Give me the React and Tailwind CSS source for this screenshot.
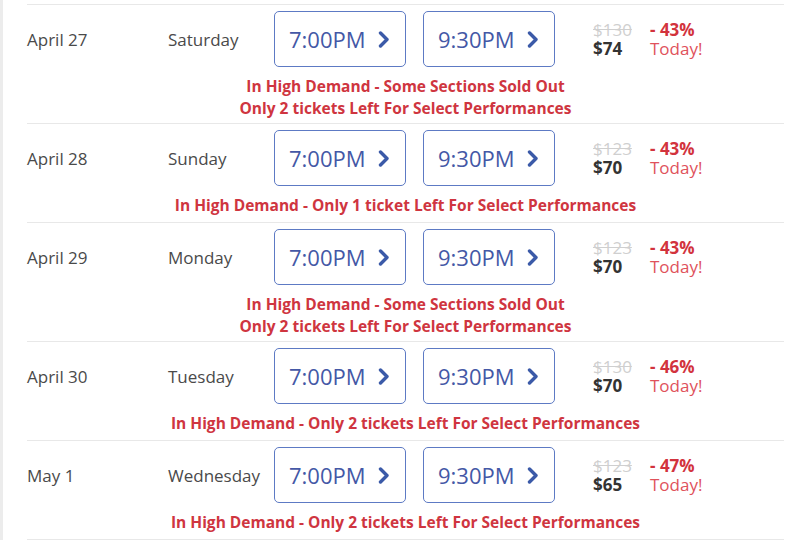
import React from 'react';

const rows = [
  { date: 'April 27', day: 'Saturday', was: '$130', now: '$74', off: '- 43%', notes: ['In High Demand - Some Sections Sold Out', 'Only 2 tickets Left For Select Performances'] },
  { date: 'April 28', day: 'Sunday', was: '$123', now: '$70', off: '- 43%', notes: ['In High Demand - Only 1 ticket Left For Select Performances'] },
  { date: 'April 29', day: 'Monday', was: '$123', now: '$70', off: '- 43%', notes: ['In High Demand - Some Sections Sold Out', 'Only 2 tickets Left For Select Performances'] },
  { date: 'April 30', day: 'Tuesday', was: '$130', now: '$70', off: '- 46%', notes: ['In High Demand - Only 2 tickets Left For Select Performances'] },
  { date: 'May 1', day: 'Wednesday', was: '$123', now: '$65', off: '- 47%', notes: ['In High Demand - Only 2 tickets Left For Select Performances'] },
];

const Chevron = () => (
  <svg width="12" height="17" viewBox="0 0 12 17" className="shrink-0">
    <path d="M2.5 2 L9 8.5 L2.5 15" fill="none" stroke="#3b5aa8" strokeWidth="3.4" strokeLinecap="round" strokeLinejoin="round" />
  </svg>
);

const TimeButton = ({ time }) => (
  <button className="w-[132px] h-[56px] border border-[#5d7ac4] rounded-[5px] bg-white flex items-center pl-[14px] pr-[15px] justify-between cursor-pointer">
    <span className="text-[22px] text-[#4458a6] leading-none">{time}</span>
    <Chevron />
  </button>
);

const App = () => {
  return (
    <div className="bg-white w-[800px] h-[553px] overflow-hidden" style={{ fontFamily: '"Open Sans", sans-serif' }}>
      <div className="border-l-[3px] border-[#ececec] pl-[24px] pr-[16px] pt-[4px]">
        {rows.map((r, i) => (
          <div
            key={i}
            className={`border-t border-[#e8e8e8] pt-[6px] last:border-b ${r.notes.length === 1 ? 'pb-[6px]' : 'pb-[4px]'}`}
          >
            <div className="flex items-center">
              <div className="w-[141px] text-[17px] text-[#4a4a4a] pt-[1px]">{r.date}</div>
              <div className="w-[106px] text-[17px] text-[#4a4a4a] pt-[1px]">{r.day}</div>
              <div className="flex gap-[17px]">
                <TimeButton time="7:00PM" />
                <TimeButton time="9:30PM" />
              </div>
              <div className="ml-[38px] w-[57px] flex flex-col leading-[19px]">
                <span className="text-[17px] text-[#cfcfcf] line-through">{r.was}</span>
                <span className="text-[17px] font-bold text-[#333]">{r.now}</span>
              </div>
              <div className="flex flex-col leading-[19px]">
                <span className="text-[17px] font-bold text-[#d2333d]">{r.off}</span>
                <span className="text-[17px] text-[#e0525b]">Today!</span>
              </div>
            </div>
            <div className="mt-[8px] text-center text-[15.5px] font-bold text-[#cf3540] leading-[22px]">
              {r.notes.map((n, j) => (
                <div key={j}>{n}</div>
              ))}
            </div>
          </div>
        ))}
      </div>
    </div>
  );
};

export default App;
